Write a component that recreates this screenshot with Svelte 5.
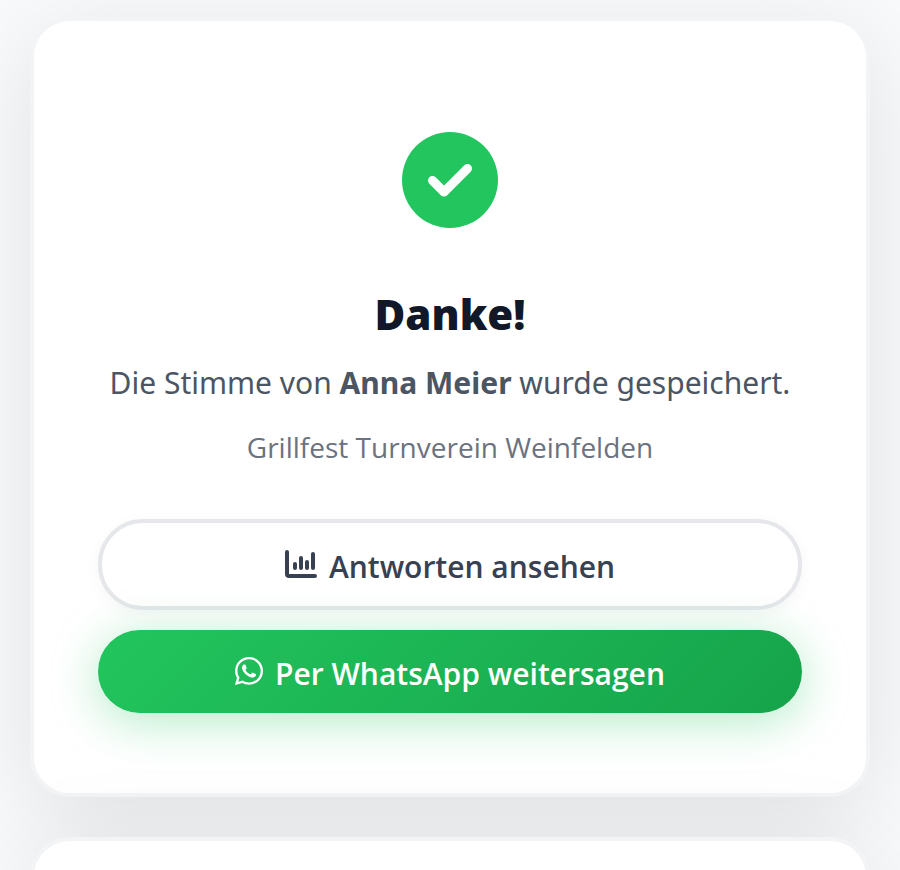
<script lang="ts">
	const voter = 'Anna Meier';
	const poll = 'Grillfest Turnverein Weinfelden';

	let shareUrl = 'https://wa.me/?text=' + encodeURIComponent(poll);
</script>

<main class="page">
	<section class="card">
		<svg class="check" viewBox="0 0 96 96" aria-hidden="true">
			<circle cx="48" cy="48" r="48" fill="#22c55e" />
			<path d="M30.5 48.5 42 60 65.5 36.5" fill="none" stroke="#fff" stroke-width="9" stroke-linecap="round" stroke-linejoin="round" />
		</svg>

		<h1>Danke!</h1>
		<p class="message">Die Stimme von <strong>{voter}</strong> wurde gespeichert.</p>
		<p class="poll">{poll}</p>

		<div class="actions">
			<button class="btn outline" type="button">
				<svg class="chart" viewBox="0 0 32 28" aria-hidden="true">
					<g fill="none" stroke="currentColor" stroke-width="4" stroke-linecap="round" stroke-linejoin="round">
						<path d="M2 2v22q0 2 2 2h26" />
						<path d="M10 14v4M16 8v10M22 12v6M28 4v14" />
					</g>
				</svg>
				<span>Antworten ansehen</span>
			</button>
			<a class="btn whatsapp" href={shareUrl}>
				<svg class="wa" viewBox="0 32 448 448" aria-hidden="true">
					<path fill="currentColor" d="M380.9 97.1C339 55.1 283.2 32 223.9 32c-122.4 0-222 99.6-222 222 0 39.1 10.2 77.3 29.6 111L0 480l117.7-30.9c32.4 17.7 68.9 27 106.1 27h.1c122.3 0 224.1-99.6 224.1-222 0-59.3-25.2-115-67.1-157zm-157 341.6c-33.2 0-65.7-8.9-94-25.7l-6.7-4-69.8 18.3L72 359.2l-4.4-7c-18.5-29.4-28.2-63.3-28.2-98.2 0-101.7 82.8-184.5 184.6-184.5 49.3 0 95.6 19.2 130.4 54.1 34.8 34.9 56.2 81.2 56.1 130.5 0 101.8-84.9 184.6-186.6 184.6zm101.2-138.2c-5.5-2.8-32.8-16.2-37.9-18-5.1-1.9-8.8-2.8-12.5 2.8-3.7 5.6-14.3 18-17.6 21.8-3.2 3.7-6.5 4.2-12 1.4-32.6-16.3-54-29.1-75.5-66-5.7-9.8 5.7-9.1 16.3-30.3 1.8-3.7.9-6.9-.5-9.7-1.4-2.8-12.5-30.1-17.1-41.2-4.5-10.8-9.1-9.3-12.5-9.5-3.2-.2-6.9-.2-10.6-.2-3.7 0-9.7 1.4-14.8 6.9-5.1 5.6-19.4 19-19.4 46.3 0 27.3 19.9 53.7 22.6 57.4 2.8 3.7 39.1 59.7 94.8 83.8 35.2 15.2 49 16.5 66.6 13.9 10.7-1.6 32.8-13.4 37.4-26.4 4.6-13 4.6-24.1 3.2-26.4-1.3-2.5-5-3.9-10.5-6.6z" />
				</svg>
				<span>Per WhatsApp weitersagen</span>
			</a>
		</div>
	</section>

	<section class="card"></section>
</main>

<style>
	:global(body) {
		background: #f8fafc;
	}

	.page {
		display: flex;
		flex-direction: column;
		gap: 40px;
		height: 100vh;
		box-sizing: border-box;
		overflow: hidden;
		padding: 17px 30px 0;
		font-family: 'Segoe UI', 'Open Sans', 'Noto Sans', sans-serif;
	}

	.card {
		display: flex;
		flex-direction: column;
		flex-shrink: 0;
		align-items: center;
		box-sizing: border-box;
		padding: 111px 64px 80px;
		background: #fff;
		border: 4px solid #f3f4f6;
		border-radius: 40px;
		box-shadow: 0 20px 100px rgba(0, 0, 0, 0.1);
		text-align: center;
	}

	.check {
		width: 96px;
		height: 96px;
	}

	h1 {
		margin: 56px 0 0;
		color: #111827;
		font-size: 42px;
		font-weight: 800;
		line-height: 60px;
	}

	p {
		margin: 0;
	}

	.message {
		margin-top: 15px;
		color: #4b5563;
		font-family: 'Segoe UI', 'Noto Sans', sans-serif;
		font-size: 30px;
		line-height: 48px;
	}

	.message strong {
		font-weight: 700;
	}

	.poll {
		margin-top: 20px;
		color: #6b7280;
		font-size: 28px;
		font-weight: 400;
		line-height: 40px;
	}

	.actions {
		display: flex;
		flex-direction: column;
		align-self: stretch;
		gap: 20px;
		margin-top: 52px;
	}

	.btn {
		display: flex;
		align-items: baseline;
		justify-content: center;
		gap: 12px;
		box-sizing: border-box;
		padding: 22px 48px 18px;
		border: 0;
		border-radius: 45px;
		font: inherit;
		font-size: 30px;
		font-weight: 600;
		line-height: 43px;
		text-decoration: none;
		cursor: pointer;
	}

	.outline {
		background: #fff;
		border: 4px solid #e5e7eb;
		color: #374151;
		box-shadow: 0 4px 16px rgba(0, 0, 0, 0.04);
	}

	.whatsapp {
		background: linear-gradient(135deg, #22c55e, #16a34a);
		color: #fff;
		box-shadow: 0 8px 48px rgba(34, 197, 94, 0.35);
	}

	.chart {
		width: 32px;
		height: 28px;
	}

	.wa {
		width: 28px;
		height: 28px;
	}
</style>
